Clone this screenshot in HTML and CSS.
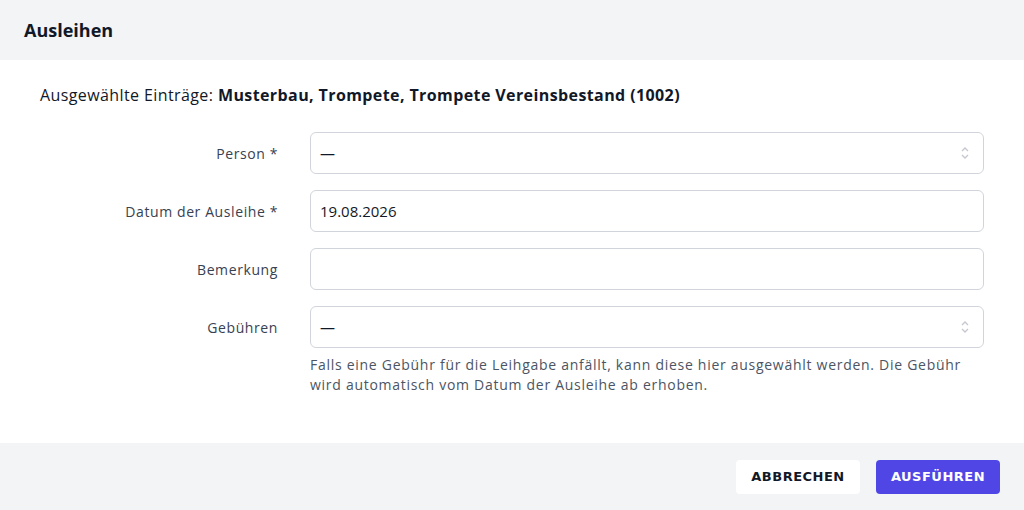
FILE: index.html
```html
<!DOCTYPE html>
<html lang="de">

<head>
    <meta charset="UTF-8">
    <title>Ausleihen</title>
    <link rel="stylesheet" href="styles.css">
</head>

<body>
    <div class="dialog">
        <!-- Kopfzeile -->
        <div class="dialog-head">Ausleihen</div>

        <div class="dialog-body">
            <p class="selected">Ausgewählte Einträge: <b>Musterbau, Trompete, Trompete Vereinsbestand (1002)</b></p>

            <div class="form">
                <label class="label">Person *</label>
                <div class="field select">
                    <span>—</span>
                    <svg class="arrows" width="10" height="16" viewBox="0 0 10 16">
                        <path d="M2 6 L5 3 L8 6 M2 10 L5 13 L8 10" fill="none" stroke="#c4c7cd" stroke-width="1.3" />
                    </svg>
                </div>

                <label class="label">Datum der Ausleihe *</label>
                <div class="field"><span>19.08.2026</span></div>

                <label class="label">Bemerkung</label>
                <div class="field"></div>

                <label class="label">Gebühren</label>
                <div>
                    <div class="field select">
                        <span>—</span>
                        <svg class="arrows" width="10" height="16" viewBox="0 0 10 16">
                            <path d="M2 6 L5 3 L8 6 M2 10 L5 13 L8 10" fill="none" stroke="#c4c7cd" stroke-width="1.3" />
                        </svg>
                    </div>
                    <p class="hint">Falls eine Gebühr für die Leihgabe anfällt, kann diese hier ausgewählt werden. Die Gebühr wird automatisch vom Datum der Ausleihe ab erhoben.</p>
                </div>
            </div>
        </div>

        <!-- Fußzeile -->
        <div class="dialog-foot">
            <button class="btn btn-cancel">ABBRECHEN</button>
            <button class="btn btn-ok">AUSFÜHREN</button>
        </div>
    </div>
</body>

</html>
```

FILE: styles.css
```css
body {
    margin: 0;
    font-family: "Open Sans", "Noto Sans", sans-serif;
    color: #1f2937;
    background: #fff;
}

.dialog {
    width: 1024px;
    height: 510px;
    display: flex;
    flex-direction: column;
}

.dialog-head {
    height: 60px;
    background: #f3f4f6;
    display: flex;
    align-items: center;
    padding: 0 24px;
    font-size: 18px;
    font-weight: 700;
    color: #111827;
}

.dialog-body {
    flex: 1;
    padding: 0 40px 0 40px;
}

.selected {
    margin: 23px 0 25px 0;
    font-size: 16px;
    line-height: 24px;
    letter-spacing: 0.4px;
    color: #111827;
}

.selected b {
    font-weight: 700;
}

.form {
    display: grid;
    grid-template-columns: 238px 674px;
    column-gap: 32px;
    row-gap: 16px;
}

.label {
    height: 42px;
    display: flex;
    align-items: center;
    justify-content: flex-end;
    font-size: 14px;
    letter-spacing: 0.6px;
    color: #374151;
}

.field {
    height: 40px;
    border: 1px solid #d1d5db;
    border-radius: 6px;
    display: flex;
    align-items: center;
    justify-content: space-between;
    padding: 0 13px 0 9px;
    font-size: 15px;
    color: #111827;
}

.arrows {
    display: block;
}

.hint {
    margin: 7px 0 0 0;
    font-size: 14px;
    line-height: 20px;
    letter-spacing: 0.72px;
    color: #4b5563;
}

.dialog-foot {
    height: 67px;
    background: #f3f4f6;
    display: flex;
    align-items: center;
    justify-content: flex-end;
    gap: 16px;
    padding: 0 24px;
}

.btn {
    height: 34px;
    width: 124px;
    border: none;
    border-radius: 4px;
    font-family: "DejaVu Sans", sans-serif;
    font-size: 13px;
    font-weight: 700;
    letter-spacing: 0.5px;
}

.btn-cancel {
    background: #fff;
    color: #111827;
}

.btn-ok {
    background: #4f46e5;
    color: #fff;
}
```
